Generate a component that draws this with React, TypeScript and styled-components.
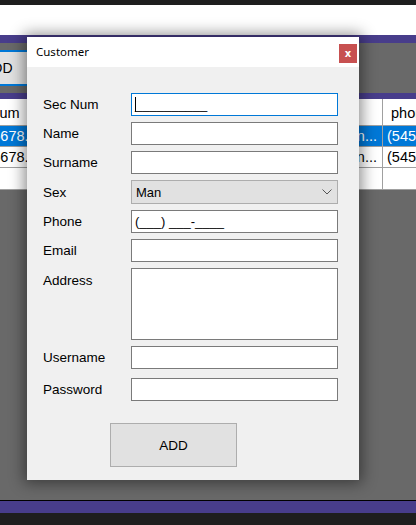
import React from "react";
import styled, { createGlobalStyle } from "styled-components";

const Global = createGlobalStyle`
  html, body { margin: 0; padding: 0; background: #696969; overflow: hidden; }
  * { box-sizing: border-box; }
`;

const Screen = styled.div`
  position: relative;
  width: 416px;
  height: 525px;
  display: flex;
  flex-direction: column;
  overflow: hidden;
  font-family: "Liberation Sans", Arial, sans-serif;
`;

const Band = styled.div<{ $h: number; $bg: string }>`
  height: ${(p) => p.$h}px;
  flex: 0 0 ${(p) => p.$h}px;
  background: ${(p) => p.$bg};
`;

const Toolbar = styled.div`
  height: 50px;
  flex: 0 0 50px;
  background: #696969;
  display: flex;
  align-items: flex-start;
  padding-top: 7px;
`;

const ToolButton = styled.div`
  margin-left: -40px;
  width: 80px;
  height: 36px;
  border-top: 2px solid #0078d7;
  border-bottom: 2px solid #0078d7;
  background: #e1e1e1;
  display: flex;
  align-items: center;
  padding-left: 23px;
  font-size: 14px;
  color: #000;
`;

const Table = styled.div`
  flex: 0 0 91px;
  background: #fff;
  display: grid;
  grid-template-columns: 74px 353px 80px;
  grid-template-rows: 27px 21px 21px 22px;
  margin-left: -44px;
  width: 507px;
`;

const Cell = styled.div<{ $sel?: boolean; $right?: boolean; $last?: boolean }>`
  background: ${(p) => (p.$sel ? "#0078d7" : "#fff")};
  color: ${(p) => (p.$sel ? "#fff" : "#000")};
  border-right: ${(p) => (p.$last ? "none" : "1px solid #a0a0a0")};
  border-bottom: 1px solid #a0a0a0;
  font-size: 14.5px;
  white-space: nowrap;
  overflow: hidden;
  display: flex;
  align-items: center;
  justify-content: ${(p) => (p.$right ? "flex-end" : "flex-start")};
  padding: ${(p) => (p.$right ? "0 5px 0 0" : "0 0 0 4px")};
`;

const HeadCell = styled(Cell)<{ $pl?: number }>`
  padding-left: ${(p) => p.$pl ?? 4}px;
  padding-top: 1px;
`;

const Filler = styled.div`
  flex: 1 1 auto;
  background: #696969;
`;

const Dialog = styled.div`
  position: absolute;
  left: 27px;
  top: 37px;
  width: 332px;
  height: 443px;
  background: #f0f0f0;
  box-shadow: 0 0 14px 3px rgba(0, 0, 0, 0.45);
  display: flex;
  flex-direction: column;
`;

const TitleBar = styled.div`
  height: 30px;
  flex: 0 0 30px;
  background: #fff;
  display: flex;
  align-items: center;
  padding-left: 9px;
`;

const Title = styled.div`
  flex: 1;
  font-family: "Noto Sans", "Open Sans", sans-serif;
  font-size: 11.5px;
  color: #000;
  margin-top: -1px;
`;

const CloseBtn = styled.div`
  align-self: flex-start;
  margin-top: 7px;
  margin-right: 2px;
  width: 18px;
  height: 19px;
  background: #c75050;
  color: #fff;
  font-family: "DejaVu Sans", sans-serif;
  font-weight: bold;
  font-size: 10px;
  display: flex;
  align-items: center;
  justify-content: center;
  padding-bottom: 1px;
`;

const Body = styled.div`
  flex: 1;
  padding: 26px 21px 0 16px;
  display: flex;
  flex-direction: column;
`;

const Form = styled.div`
  display: grid;
  grid-template-columns: 88px 207px;
  row-gap: 6px;
`;

const Label = styled.div<{ $top?: boolean; $mt?: number }>`
  font-size: 13.5px;
  color: #000;
  align-self: ${(p) => (p.$top ? "start" : "center")};
  padding-top: ${(p) => (p.$top ? "5px" : "0")};
  margin-top: ${(p) => p.$mt ?? 0}px;
`;

const Field = styled.div<{ $h?: number; $focus?: boolean; $mt?: number }>`
  height: ${(p) => p.$h ?? 23}px;
  margin-top: ${(p) => p.$mt ?? 0}px;
  background: #fff;
  border: 1px solid ${(p) => (p.$focus ? "#0078d7" : "#7a7a7a")};
  font-size: 13px;
  color: #000;
  display: flex;
  align-items: center;
  padding-left: 3px;
  white-space: pre;
`;

const Caret = styled.span`
  display: inline-block;
  width: 1px;
  height: 15px;
  background: #000;
  margin-right: -1px;
`;

const Combo = styled.div`
  height: 24px;
  background: #e1e1e1;
  border: 1px solid #adadad;
  font-size: 13px;
  color: #000;
  display: flex;
  align-items: center;
  padding: 0 5px 0 4px;
  justify-content: space-between;
`;

const ButtonRow = styled.div`
  padding-left: 67px;
  margin-top: 22px;
`;

const AddButton = styled.div`
  width: 127px;
  height: 44px;
  background: #e1e1e1;
  border: 1px solid #adadad;
  font-size: 13.5px;
  color: #000;
  display: flex;
  align-items: center;
  justify-content: center;
`;

const rows = [
  { sec: "12345678...", sex: "Man...", phone: "(545) 555 55 55", sel: true },
  { sec: "12345678...", sex: "Man...", phone: "(545) 555 55 55", sel: false },
];

export default function App() {
  return (
    <Screen>
      <Global />
      <Band $h={5} $bg="#1e1e1e" />
      <Band $h={30} $bg="#ffffff" />
      <Band $h={8} $bg="#483d8b" />
      <Toolbar>
        <ToolButton>ADD</ToolButton>
      </Toolbar>
      <Band $h={6} $bg="#483d8b" />
      <Table>
        <HeadCell>Sec Num</HeadCell>
        <HeadCell />
        <HeadCell $last $pl={8}>phone</HeadCell>
        {rows.map((r, i) => (
          <React.Fragment key={i}>
            <Cell $sel={r.sel}>{r.sec}</Cell>
            <Cell $sel={r.sel} $right>{r.sex}</Cell>
            <Cell $sel={r.sel} $last>{r.phone}</Cell>
          </React.Fragment>
        ))}
        <Cell />
        <Cell />
        <Cell $last />
      </Table>
      <Filler />
      <Band $h={1} $bg="#000000" />
      <Band $h={12} $bg="#483d8b" />
      <Band $h={12} $bg="#1e1e1e" />

      <Dialog>
        <TitleBar>
          <Title>Customer</Title>
          <CloseBtn>x</CloseBtn>
        </TitleBar>
        <Body>
          <Form>
            <Label>Sec Num</Label>
            <Field $focus>
              <Caret />
              {"__________"}
            </Field>
            <Label>Name</Label>
            <Field />
            <Label>Surname</Label>
            <Field />
            <Label>Sex</Label>
            <Combo>
              <span>Man</span>
              <svg width="10" height="6" viewBox="0 0 10 6">
                <polyline points="0.5,0.5 5,5 9.5,0.5" fill="none" stroke="#555" strokeWidth="1" />
              </svg>
            </Combo>
            <Label>Phone</Label>
            <Field>{"(___) ___-____"}</Field>
            <Label>Email</Label>
            <Field />
            <Label $top>Address</Label>
            <Field $h={72} />
            <Label>Username</Label>
            <Field />
            <Label $mt={3}>Password</Label>
            <Field $mt={3} />
          </Form>
          <ButtonRow>
            <AddButton>ADD</AddButton>
          </ButtonRow>
        </Body>
      </Dialog>
    </Screen>
  );
}
